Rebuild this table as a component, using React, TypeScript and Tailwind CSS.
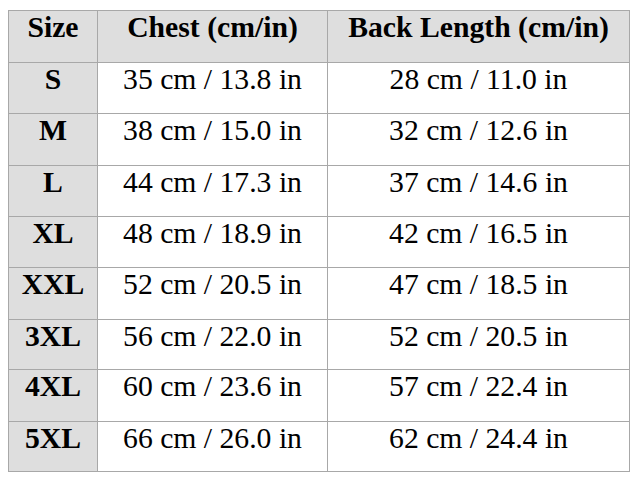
import React from "react";

const rows = [
  ["S", "35 cm / 13.8 in", "28 cm / 11.0 in", "h-[51px]"],
  ["M", "38 cm / 15.0 in", "32 cm / 12.6 in", "h-[52px]"],
  ["L", "44 cm / 17.3 in", "37 cm / 14.6 in", "h-[51px]"],
  ["XL", "48 cm / 18.9 in", "42 cm / 16.5 in", "h-[51px]"],
  ["XXL", "52 cm / 20.5 in", "47 cm / 18.5 in", "h-[52px]"],
  ["3XL", "56 cm / 22.0 in", "52 cm / 20.5 in", "h-[50px]"],
  ["4XL", "60 cm / 23.6 in", "57 cm / 22.4 in", "h-[52px]"],
  ["5XL", "66 cm / 26.0 in", "62 cm / 24.4 in", "h-[50px]"],
];

export default function App() {
  return (
    <div className="w-[639px] h-[481px] bg-white pl-[8px] pt-[10px] text-black font-['Liberation_Serif','Times_New_Roman','DejaVu_Serif',serif]">
      <div className="w-[622px] border-t border-l border-[#a8a8a8] text-[29.7px] leading-[normal]">
        <div className="flex h-[52px] bg-[#dedede] font-bold">
          <div className="w-[89px] border-r border-b border-[#a8a8a8] text-center">Size</div>
          <div className="w-[230px] border-r border-b border-[#a8a8a8] text-center">Chest (cm/in)</div>
          <div className="w-[302px] border-r border-b border-[#a8a8a8] text-center">Back Length (cm/in)</div>
        </div>
        {rows.map((r, i) => (
          <div key={i} className={`flex ${r[3]}`}>
            <div className="w-[89px] border-r border-b border-[#a8a8a8] bg-[#dedede] text-center font-bold whitespace-nowrap">{r[0]}</div>
            <div className="w-[230px] border-r border-b border-[#a8a8a8] text-center whitespace-nowrap">{r[1]}</div>
            <div className="w-[302px] border-r border-b border-[#a8a8a8] text-center whitespace-nowrap">{r[2]}</div>
          </div>
        ))}
      </div>
    </div>
  );
}
